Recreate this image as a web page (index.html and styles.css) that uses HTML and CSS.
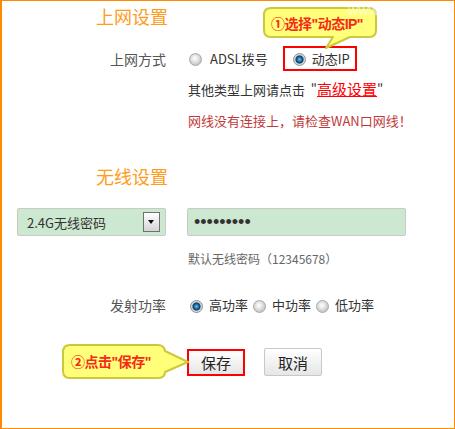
FILE: index.html
```html
<!DOCTYPE html>
<html lang="zh-CN">
<head>
    <meta charset="UTF-8">
    <title>上网设置</title>
    <link rel="stylesheet" href="styles.css">
</head>
<body>
    <div class="panel">
        <h2 class="section-title">上网设置</h2>

        <div class="row row-wan">
            <span class="label">上网方式</span>
            <div class="field radios">
                <label class="opt"><span class="radio"></span>ADSL拨号</label>
                <label class="opt opt-marked"><span class="radio checked"></span>动态IP</label>
            </div>
        </div>
        <div class="row row-note">
            <div class="field indent">其他类型上网请点击 &nbsp;"<a class="link" href="#">高级设置</a>"</div>
        </div>
        <div class="row row-warn">
            <div class="field indent warn">网线没有连接上，请检查WAN口网线！</div>
        </div>

        <h2 class="section-title title-wifi">无线设置</h2>

        <div class="row row-inputs">
            <div class="select-box">
                <span>2.4G无线密码</span>
                <span class="select-btn"></span>
            </div>
            <div class="pass-box">•••••••••</div>
        </div>
        <div class="row row-hint">
            <div class="field indent hint">默认无线密码（12345678）</div>
        </div>
        <div class="row row-power">
            <span class="label">发射功率</span>
            <div class="field radios power">
                <label class="opt"><span class="radio checked"></span>高功率</label>
                <label class="opt"><span class="radio"></span>中功率</label>
                <label class="opt"><span class="radio"></span>低功率</label>
            </div>
        </div>
        <div class="row row-buttons">
            <button class="btn btn-save">保存</button>
            <button class="btn btn-cancel">取消</button>
        </div>

        <!-- tip bubbles drawn over the form -->
        <div class="callout callout-ip">
            <svg width="118" height="46" viewBox="0 0 118 46">
                <path d="M9,2 H107 Q114,2 114,9 V24 Q114,31 107,31 H88 L64,42 L71,31 H9 Q2,31 2,24 V9 Q2,2 9,2 Z"
                      fill="#ffff7a" stroke="#c9c93a" stroke-width="2" stroke-linejoin="round"/>
            </svg>
            <span class="watermark">WWW</span>
            <span class="callout-text">①选择"动态IP"</span>
        </div>
        <div class="callout callout-save">
            <svg width="132" height="38" viewBox="0 0 132 38">
                <path d="M10,2 H98 Q104,2 105,8 L128,19 L105,29 Q105,35 98,35 H10 Q3,35 3,28 V9 Q3,2 10,2 Z"
                      fill="#ffff7a" stroke="#c9c93a" stroke-width="2" stroke-linejoin="round"/>
            </svg>
            <span class="callout-text">②点击"保存"</span>
        </div>
    </div>
</body>
</html>
```

FILE: styles.css
```css
body {
    margin: 0;
    padding: 0;
    font-family: "Noto Sans CJK SC", "Liberation Sans", sans-serif;
    background: white;
}
.panel {
    position: relative;
    width: 455px;
    height: 429px;
    box-sizing: border-box;
    border: 1px solid #ff8a00;
    border-left-width: 2px;
    padding-top: 3px;
    overflow: hidden;
}
.section-title {
    margin: 0;
    padding-left: 94px;
    font-size: 18px;
    font-weight: normal;
    line-height: 24px;
    color: #ff9c1a;
}
.title-wifi {
    margin-top: 33px;
}
.row {
    display: flex;
    align-items: center;
}
.label {
    width: 164px;
    text-align: right;
    font-size: 14px;
    color: #555;
}
.field {
    margin-left: 22px;
    font-size: 13px;
    color: #333;
    line-height: 20px;
}
.indent {
    margin-left: 186px;
}
.row-wan {
    margin-top: 18px;
    height: 25px;
}
.row-note {
    margin-top: 8px;
}
.row-warn {
    margin-top: 11px;
}
.row-inputs {
    margin-top: 20px;
}
.row-hint {
    margin-top: 13px;
}
.row-power {
    margin-top: 26px;
}
.row-buttons {
    margin-top: 33px;
    padding-left: 185px;
}
.radios {
    display: flex;
    align-items: center;
}
.opt {
    display: flex;
    align-items: center;
    gap: 8px;
    margin-left: 1px;
}
.opt-marked {
    margin-left: 15px;
    height: 25px;
    box-sizing: border-box;
    border: 2px solid #f00;
    padding: 0 5px 0 8px;
    gap: 6px;
}
.power .opt {
    gap: 6px;
    margin-left: 5px;
}
.power .opt:first-child {
    margin-left: 2px;
}
.radio {
    width: 13px;
    height: 13px;
    box-sizing: border-box;
    border-radius: 50%;
    border: 1px solid #a8a8a8;
    background: radial-gradient(circle at 45% 40%, #fff 0, #f0f0f0 2px, #c9c9c9 6px);
    margin-top: 2px;
}
.radio.checked {
    border-color: #8a8f94;
    background: radial-gradient(circle, #6cc0f2 0, #2278b5 2px, #0d3a60 3.5px, #c4c8cc 4.5px, #f2f2f2 6px);
}
.link {
    color: #f00;
    font-size: 15px;
    text-decoration: underline;
}
.warn {
    color: #c0393a;
}
.hint {
    font-size: 12px;
    color: #666;
}
.select-box {
    margin-left: 15px;
    width: 149px;
    height: 28px;
    box-sizing: border-box;
    border: 1px solid #c6cbc6;
    border-radius: 2px;
    background: #cde8d0;
    display: flex;
    align-items: center;
    justify-content: space-between;
    padding: 0 5px 0 9px;
    font-size: 13px;
    color: #333;
}
.select-btn {
    position: relative;
    width: 17px;
    height: 20px;
    box-sizing: border-box;
    border: 1px solid #707070;
    background: linear-gradient(#ffffff, #d4d4d4);
}
.select-btn::after {
    content: "";
    position: absolute;
    left: 4px;
    top: 7px;
    border-left: 3.5px solid transparent;
    border-right: 3.5px solid transparent;
    border-top: 4px solid #111;
}
.pass-box {
    margin-left: 21px;
    width: 219px;
    height: 28px;
    box-sizing: border-box;
    border: 1px solid #c6cbc6;
    border-radius: 2px;
    background: #cde8d0;
    padding-left: 6px;
    font-family: "Liberation Sans", sans-serif;
    font-size: 18px;
    line-height: 26px;
    color: #333;
}
.btn {
    width: 58px;
    height: 28px;
    box-sizing: border-box;
    font-family: "Noto Sans CJK SC", sans-serif;
    font-size: 15px;
    color: #222;
    border: 1px solid #c8c8c8;
    border-radius: 2px;
    background: linear-gradient(#ffffff, #e6e6e6);
    padding: 0;
}
.btn-save {
    height: 27px;
    border: 2px solid #f00;
    border-radius: 0;
}
.btn-cancel {
    margin-left: 19px;
}
.callout {
    position: absolute;
}
.callout svg {
    position: absolute;
    left: 0;
    top: 0;
}
.callout-text {
    position: relative;
    display: block;
    font-family: "Liberation Sans", "Noto Sans CJK SC", sans-serif;
    font-size: 14px;
    font-weight: bold;
    line-height: 20px;
    color: #f52a1a;
    white-space: nowrap;
    letter-spacing: -0.5px;
}
.callout-ip {
    left: 260px;
    top: 5px;
    width: 118px;
    height: 46px;
}
.callout-ip .callout-text {
    padding: 8px 0 0 9px;
}
.watermark {
    position: absolute;
    left: 86px;
    top: -1px;
    font-family: "Liberation Sans", sans-serif;
    font-size: 11px;
    line-height: 13px;
    color: rgba(255, 255, 255, 0.7);
}
.callout-save {
    left: 58px;
    top: 342px;
    width: 132px;
    height: 38px;
}
.callout-save .callout-text {
    padding: 9px 0 0 11px;
}
```
